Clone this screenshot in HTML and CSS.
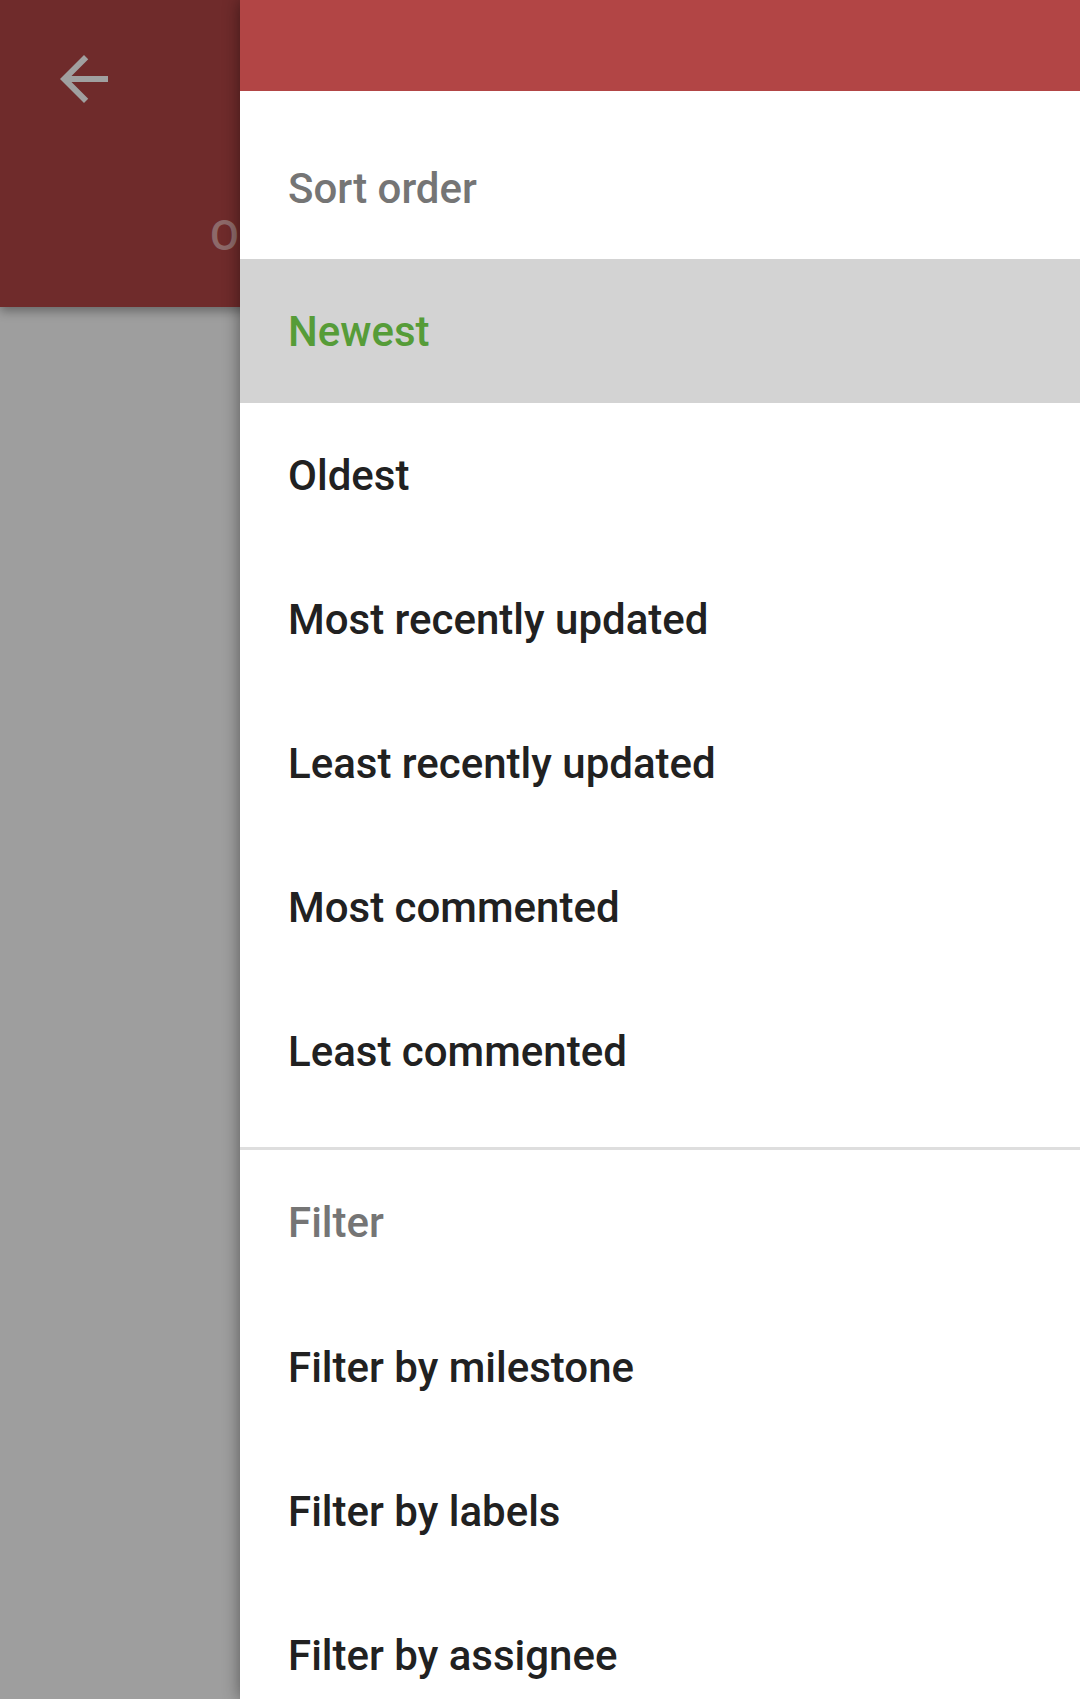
FILE: index.html
```html
<!DOCTYPE html>
<html lang="en">
<head>
<meta charset="utf-8">
<title>Sort and filter</title>
<link rel="stylesheet" href="styles.css">
</head>
<body>
<div class="screen">
  <div class="app">
    <header class="toolbar">
      <div class="toolbar-row">
        <svg class="back" viewBox="0 0 24 24" width="72" height="72" aria-hidden="true">
          <path d="M20 11H7.83l5.59-5.59L12 4l-8 8 8 8 1.41-1.41L7.83 13H20v-2z" fill="#a0a0a0"/>
        </svg>
      </div>
      <div class="tabs">
        <span class="tab">OPEN</span>
      </div>
    </header>
    <main class="content"></main>
  </div>

  <aside class="drawer">
    <div class="drawer-top"></div>
    <div class="subheader first">Sort order</div>
    <ul class="menu">
      <li class="item selected">Newest</li>
      <li class="item">Oldest</li>
      <li class="item">Most recently updated</li>
      <li class="item">Least recently updated</li>
      <li class="item">Most commented</li>
      <li class="item">Least commented</li>
    </ul>
    <div class="divider"></div>
    <div class="subheader">Filter</div>
    <ul class="menu">
      <li class="item">Filter by milestone</li>
      <li class="item">Filter by labels</li>
      <li class="item">Filter by assignee</li>
    </ul>
  </aside>
</div>
</body>
</html>
```

FILE: styles.css
```css
html, body {
  margin: 0;
  padding: 0;
}

body {
  width: 1080px;
  height: 1699px;
  overflow: hidden;
  font-family: Roboto, "Noto Sans", "Liberation Sans", sans-serif;
  background: #9e9e9e;
}

.screen {
  position: relative;
  width: 1080px;
  height: 1699px;
  overflow: hidden;
}

.app {
  display: flex;
  flex-direction: column;
  width: 100%;
  height: 100%;
}

.toolbar {
  height: 307px;
  background: #6f2b2b;
  box-shadow: 0 4px 10px rgba(0, 0, 0, 0.35);
  display: flex;
  flex-direction: column;
  position: relative;
  z-index: 1;
}

.toolbar-row {
  height: 168px;
  padding: 43px 0 0 48px;
  box-sizing: border-box;
}

.back {
  display: block;
}

.tabs {
  padding-left: 210px;
}

.tab {
  font-size: 42px;
  font-weight: 500;
  line-height: 48px;
  color: #8d6969;
  display: inline-block;
  margin-top: 44px;
}

.content {
  flex: 1;
  background: #9e9e9e;
}

.drawer {
  position: absolute;
  top: 0;
  left: 240px;
  width: 840px;
  height: 1699px;
  background: #ffffff;
  box-shadow: 0 0 16px rgba(0, 0, 0, 0.45);
  z-index: 2;
  display: flex;
  flex-direction: column;
}

.drawer-top {
  height: 91px;
  flex: 0 0 91px;
  background: #b24545;
}

.subheader {
  font-size: 42px;
  font-weight: 500;
  color: #757575;
  padding-left: 48px;
  line-height: 146px;
  height: 145px;
  flex: 0 0 auto;
}

.subheader.first {
  padding-top: 26px;
  line-height: 144px;
  height: 142px;
}

.menu {
  list-style: none;
  margin: 0;
  padding: 0;
  flex: 0 0 auto;
}

.item {
  height: 144px;
  line-height: 146px;
  padding-left: 48px;
  font-size: 42px;
  font-weight: 500;
  color: #212121;
  white-space: nowrap;
  overflow: hidden;
}

.item.selected {
  background: #d3d3d3;
  color: #569c38;
}

.divider {
  flex: 0 0 3px;
  height: 3px;
  margin-top: 24px;
  background: #dedede;
}
```
